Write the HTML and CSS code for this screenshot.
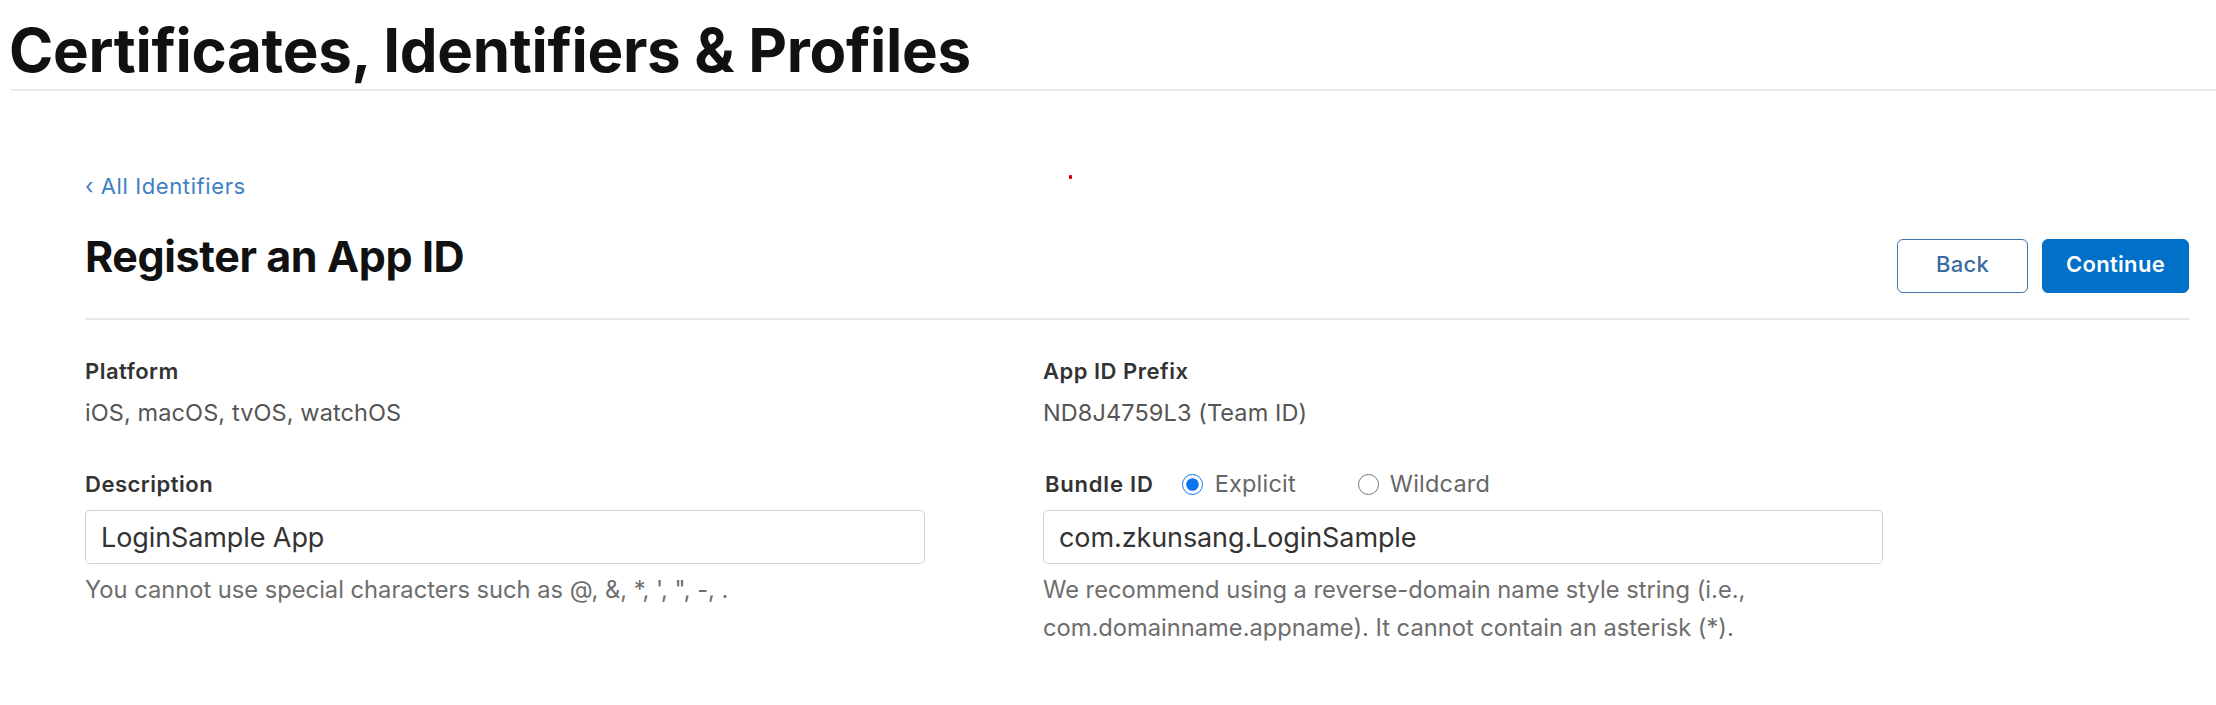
FILE: index.html
```html
<!DOCTYPE html>
<html lang="en">
<head>
<meta charset="utf-8">
<title>Register an App ID</title>
<link rel="stylesheet" href="styles.css">
</head>
<body>
<header class="page-header">
  <h1 class="page-title">Certificates, Identifiers &amp; Profiles</h1>
</header>
<main class="content">
  <a class="back-link" href="#">‹ All Identifiers</a>
  <div class="title-row">
    <h2 class="section-title">Register an App ID</h2>
    <div class="actions">
      <button class="btn btn-secondary" type="button">Back</button>
      <button class="btn btn-primary" type="button">Continue</button>
    </div>
  </div>
  <div class="form-grid">
    <div class="form-col">
      <div class="field-label">Platform</div>
      <div class="field-value">iOS, macOS, tvOS, watchOS</div>
      <div class="field-label label-row">Description</div>
      <input class="textbox" type="text" value="LoginSample App">
      <p class="help">You cannot use special characters such as @, &amp;, *, ', ", -, .</p>
    </div>
    <div class="form-col">
      <div class="field-label">App ID Prefix</div>
      <div class="field-value">ND8J4759L3 (Team ID)</div>
      <div class="field-label label-row bundle-row">
        <span>Bundle ID</span>
        <input class="radio radio-first" type="radio" name="bundle" id="explicit" checked>
        <label class="radio-label" for="explicit">Explicit</label>
        <input class="radio radio-second" type="radio" name="bundle" id="wildcard">
        <label class="radio-label radio-label-second" for="wildcard">Wildcard</label>
      </div>
      <input class="textbox" type="text" value="com.zkunsang.LoginSample">
      <p class="help">We recommend using a reverse-domain name style string (i.e., com.domainname.appname). It cannot contain an asterisk (*).</p>
    </div>
  </div>
</main>
<span class="red-dot"></span>
</body>
</html>
```

FILE: styles.css
```css
* {
  box-sizing: border-box;
}

html, body {
  margin: 0;
  padding: 0;
  background: #ffffff;
}

body {
  font-family: Inter, "Liberation Sans", Arial, sans-serif;
  color: #1d1d1f;
  width: 2216px;
  min-height: 705px;
  position: relative;
}

.page-header {
  margin-left: 11px;
  padding-top: 20px;
  padding-bottom: 9px;
  border-bottom: 2px solid #e8e8e8;
}

.page-title {
  margin: 0 0 0 -2px;
  font-size: 60px;
  line-height: 60px;
  font-weight: 700;
  letter-spacing: -0.3px;
  color: #111111;
}

.content {
  padding: 0 27px 0 85px;
}

.back-link {
  display: block;
  margin-top: 80px;
  font-size: 22px;
  line-height: 30px;
  letter-spacing: 0.6px;
  color: #3f7fc2;
  text-decoration: none;
  width: max-content;
}

.title-row {
  margin-top: 38px;
  display: flex;
  justify-content: space-between;
  align-items: flex-start;
  padding-bottom: 25px;
  border-bottom: 2px solid #e8e8e8;
}

.section-title {
  margin: 0;
  font-size: 43px;
  line-height: 34px;
  font-weight: 700;
  letter-spacing: -0.4px;
  color: #111111;
}

.actions {
  display: flex;
  gap: 14px;
}

.btn {
  height: 54px;
  border-radius: 6px;
  font-family: Inter, "Liberation Sans", Arial, sans-serif;
  font-size: 22px;
  font-weight: 600;
  letter-spacing: 0.3px;
  padding: 0 0 4px 0;
  cursor: pointer;
}

.btn-secondary {
  width: 131px;
  background: #ffffff;
  border: 1.5px solid #3d74ab;
  color: #3a6c9f;
  font-weight: 500;
}

.btn-primary {
  width: 147px;
  background: #0070c9;
  border: 1px solid #0070c9;
  color: #ffffff;
}

.form-grid {
  display: grid;
  grid-template-columns: 958px 958px;
  padding-top: 36px;
}

.form-col {
  display: flex;
  flex-direction: column;
  align-items: flex-start;
}

.field-label {
  font-size: 22px;
  line-height: 30px;
  font-weight: 600;
  letter-spacing: 0.5px;
  color: #333333;
}

.field-value {
  margin-top: 12px;
  font-size: 23.5px;
  line-height: 30px;
  letter-spacing: 0.1px;
  color: #555555;
}

.label-row {
  margin-top: 41px;
  height: 30px;
}

.bundle-row {
  display: flex;
  align-items: center;
  padding-left: 2px;
  letter-spacing: 0.8px;
}

.radio {
  margin: 0;
  width: 21px;
  height: 21px;
  accent-color: #0a74f0;
}

.radio-first {
  margin-left: 28px;
}

.radio-second {
  margin-left: 62px;
}

.radio-label {
  margin-left: 12px;
  font-size: 23.5px;
  font-weight: 400;
  letter-spacing: 0.2px;
  color: #666666;
}

.radio-label-second {
  margin-left: 11px;
}

.textbox {
  margin-top: 11px;
  width: 840px;
  height: 54px;
  padding: 0 15px;
  border: 1px solid #d4d4d8;
  border-radius: 5px;
  font-family: Inter, "Liberation Sans", Arial, sans-serif;
  font-size: 27px;
  letter-spacing: -0.1px;
  color: #333333;
  background: #ffffff;
  outline: none;
}

.help {
  margin: 7px 0 0 0;
  width: 840px;
  font-size: 23.7px;
  line-height: 38px;
  color: #6e6e6e;
}

.red-dot {
  position: absolute;
  left: 1069px;
  top: 175px;
  width: 3px;
  height: 4px;
  background: #d40000;
  border-radius: 1px;
}
```
